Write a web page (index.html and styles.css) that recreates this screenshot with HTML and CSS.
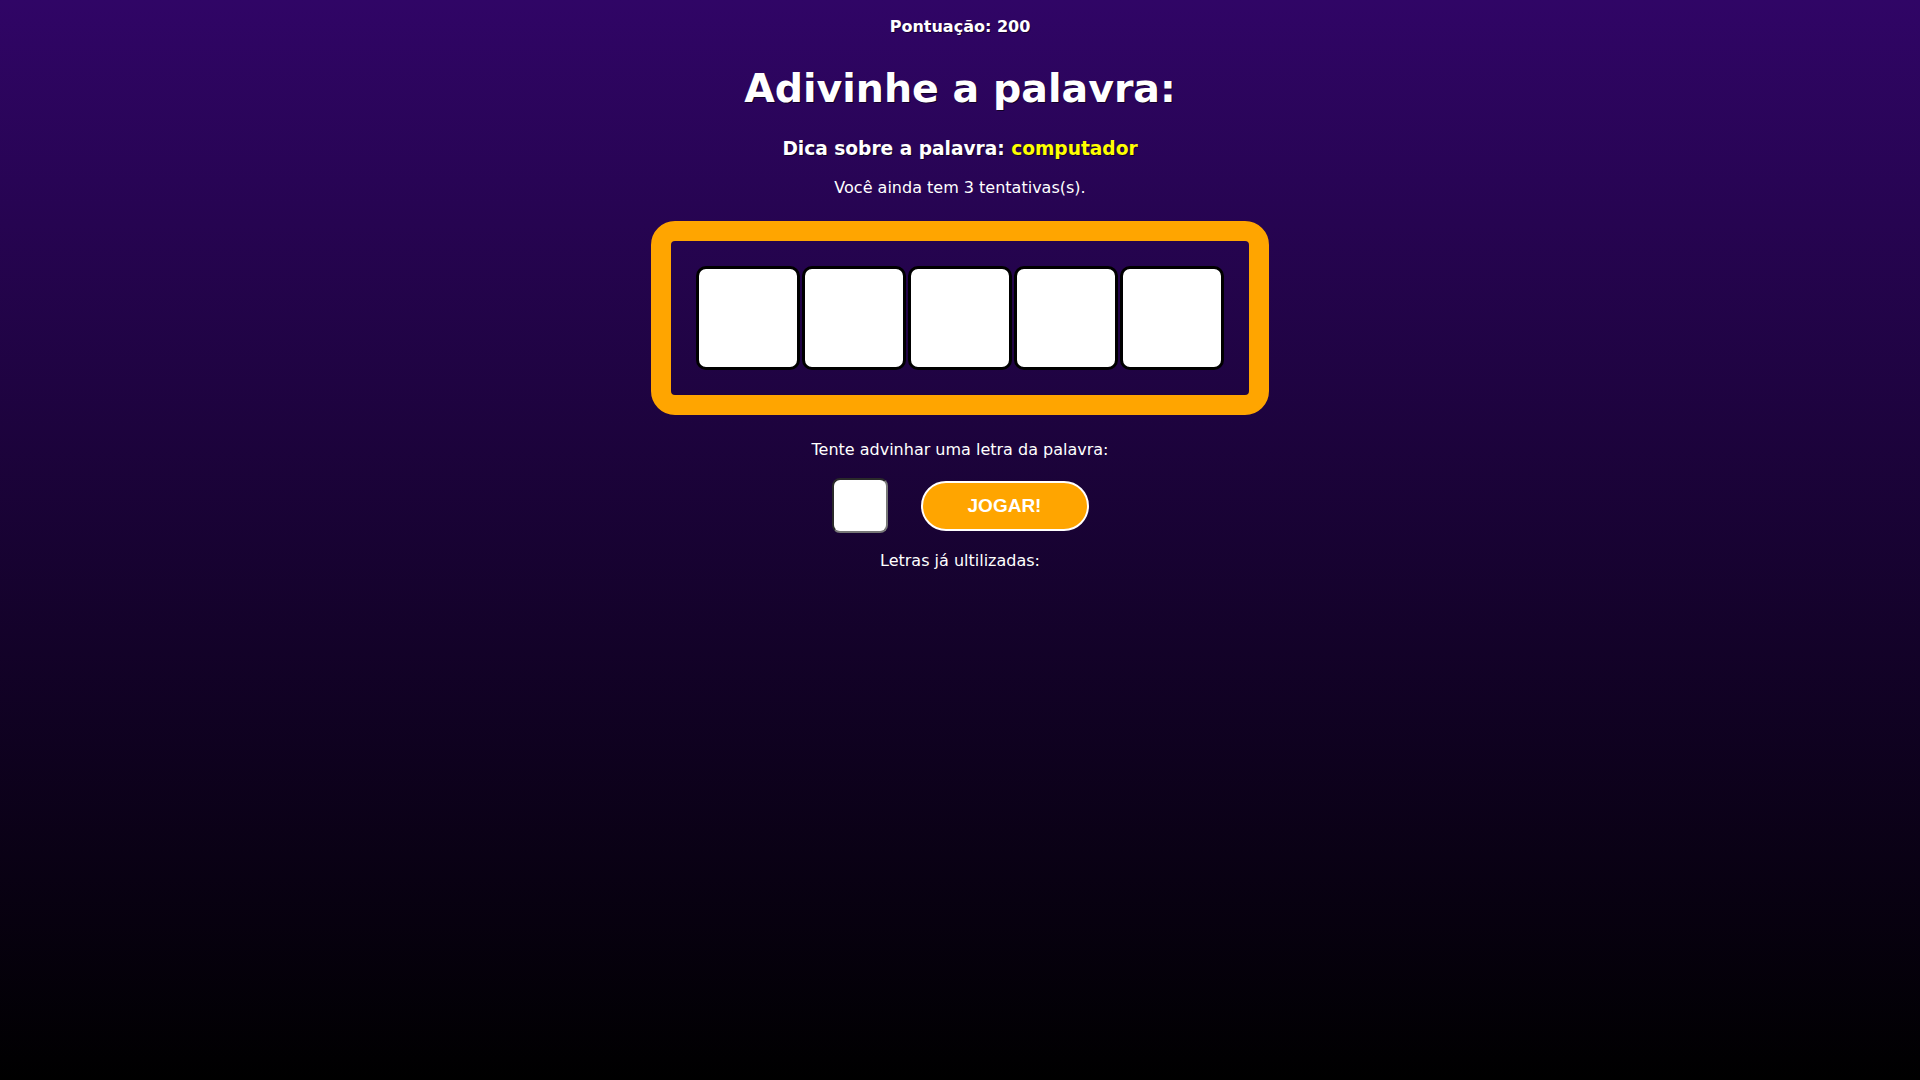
FILE: index.html
```html
<!DOCTYPE html>
<html lang="pt-BR">
<head>
<meta charset="utf-8">
<title>Adivinhe a palavra</title>
<link rel="stylesheet" href="styles.css">
</head>
<body>
<main class="game">
  <p class="score">Pontuação: 200</p>
  <h1 class="title">Adivinhe a palavra:</h1>
  <h3 class="hint">Dica sobre a palavra: <span class="hint-word">computador</span></h3>
  <p class="tries">Você ainda tem 3 tentativas(s).</p>
  <div class="board">
    <div class="letters">
      <div class="letter"></div>
      <div class="letter"></div>
      <div class="letter"></div>
      <div class="letter"></div>
      <div class="letter"></div>
    </div>
  </div>
  <p class="prompt">Tente advinhar uma letra da palavra:</p>
  <div class="controls">
    <input class="guess" type="text" maxlength="1">
    <button class="play">JOGAR!</button>
  </div>
  <p class="used">Letras já ultilizadas:</p>
</main>
</body>
</html>
```
FILE: styles.css
```css
html, body {
  margin: 0;
  padding: 0;
  height: 100%;
}
body {
  background: linear-gradient(to bottom, #300566 0%, #000000 100%);
  min-height: 1080px;
  font-family: "DejaVu Sans", Verdana, sans-serif;
  color: #ffffff;
}
.game {
  display: flex;
  flex-direction: column;
  align-items: center;
  padding-top: 17px;
}
.game p, .game h1, .game h3 {
  margin: 0;
  line-height: normal;
}
.score {
  font-size: 16px;
  font-weight: bold;
  text-shadow: 1px 1px 0 rgba(0,0,0,0.5);
}
.title {
  margin-top: 29px !important;
  font-size: 39.5px;
  font-weight: bold;
  text-shadow: 1px 1px 0 rgba(0,0,0,0.6);
}
.hint {
  margin-top: 27px !important;
  font-size: 18.6px;
  font-weight: bold;
  text-shadow: 1px 1px 0 rgba(0,0,0,0.6);
}
.hint-word {
  color: #ffff00;
}
.tries {
  margin-top: 19px !important;
  font-size: 16px;
}
.board {
  margin-top: 24px;
  border: 20px solid #ffa500;
  border-radius: 24px;
  padding: 25px;
}
.letters {
  display: flex;
  gap: 2px;
}
.letter {
  width: 104px;
  height: 104px;
  box-sizing: border-box;
  background: #ffffff;
  border: 3px solid #000000;
  border-radius: 10px;
}
.prompt {
  margin-top: 25px !important;
  font-size: 16px;
}
.controls {
  margin-top: 19px;
  display: flex;
  align-items: center;
  gap: 33px;
}
.guess {
  width: 56px;
  height: 55px;
  box-sizing: border-box;
  margin: 0;
  padding: 0;
  background: #ffffff;
  border: 2px solid;
  border-color: #2a2a2a #777777 #777777 #2a2a2a;
  border-radius: 8px;
  font-size: 24px;
  text-align: center;
}
.play {
  width: 168px;
  height: 50px;
  box-sizing: border-box;
  margin: 0;
  background: #ffa500;
  border: 2px solid #ffffff;
  border-radius: 25px;
  color: #ffffff;
  font-family: "Liberation Sans", Arial, sans-serif;
  font-weight: bold;
  font-size: 19px;
  cursor: pointer;
}
.used {
  margin-top: 18px !important;
  font-size: 16px;
}
```
